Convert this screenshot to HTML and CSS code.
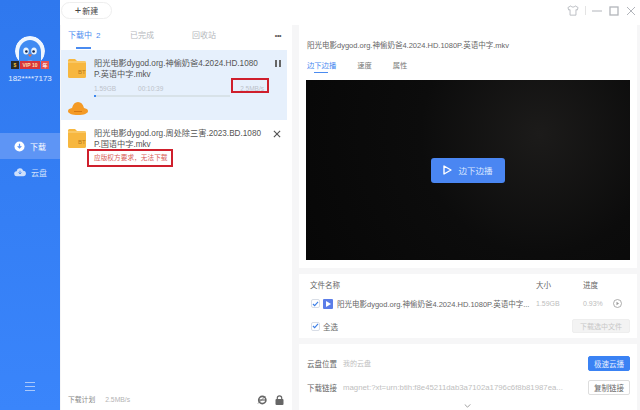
FILE: index.html
```html
<!DOCTYPE html>
<html lang="zh">
<head>
<meta charset="utf-8">
<title>下载</title>
<link rel="stylesheet" href="styles.css">
</head>
<body>
<div class="app">
  <aside class="side">
    <div class="profile">
      <div class="avatar">
        <svg viewBox="0 0 30 30" width="30" height="30">
          <circle cx="15" cy="15" r="15" fill="#eef6ff"/>
          <path d="M4 30V16C4 9 9 4 15 4s11 5 11 12v14z" fill="#3f8bf2"/>
          <ellipse cx="11" cy="15" rx="2.800" ry="3.600" fill="#e6f3ff"/>
          <ellipse cx="19" cy="15" rx="2.800" ry="3.600" fill="#e6f3ff"/>
          <circle cx="11.400" cy="15.500" r="1.300" fill="#16264f"/>
          <circle cx="18.600" cy="15.500" r="1.300" fill="#16264f"/>
          <path d="M12.800 18.500h4.400L15 21z" fill="#ef6a35"/>
          <path d="M6 30c2-7 16-7 18 0z" fill="#dcecff"/>
        </svg>
      </div>
      <div class="badges"><span class="b-s">$</span><span class="b-vip">VIP 10</span><span class="b-r">年</span></div>
      <div class="phone">182****7173</div>
    </div>
    <nav class="nav">
      <div class="nav-item active">
        <svg viewBox="0 0 12 12" width="11" height="11"><circle cx="6" cy="6" r="5.500" fill="#fff"/><path d="M6 3v4M4 5.600 6 7.600l2-2" fill="none" stroke="#5e95f5" stroke-width="1.300"/></svg>
        <span>下载</span>
      </div>
      <div class="nav-item">
        <svg viewBox="0 0 14 10" width="12" height="10"><path d="M3.500 10a3 3 0 0 1-.5-6 4 4 0 0 1 7.700-.6A3.300 3.300 0 0 1 10.500 10z" fill="#cfe0fb"/><path d="M7 3.500v3.500M5.300 5.600 7 7.300l1.700-1.700" fill="none" stroke="#3f86f5" stroke-width="1"/></svg>
        <span>云盘</span>
      </div>
    </nav>
    <div class="menu"><i></i><i></i><i></i></div>
  </aside>

  <div class="main">
    <header class="top">
      <button class="new"><span class="plus">+</span>新建</button>
      <div class="win">
        <svg viewBox="0 0 14 13" width="12" height="11"><path d="M4.500 1 1 3l1 3 1.500-.5V12h7V5.500L12 6l1-3-3.500-2C9 3 5 3 4.500 1z" fill="none" stroke="#b2b5bb"/></svg>
        <span class="sep"></span>
        <svg viewBox="0 0 10 10" width="10" height="10"><path d="M0 5h10" stroke="#b2b5bb"/></svg>
        <svg viewBox="0 0 10 10" width="10" height="10"><rect x="1" y="1" width="8" height="8" fill="none" stroke="#b2b5bb" stroke-width="1.300"/></svg>
        <svg viewBox="0 0 10 10" width="10" height="10"><path d="M1 1l8 8M9 1l-8 8" stroke="#b2b5bb"/></svg>
      </div>
    </header>

    <div class="body">
      <section class="list">
        <div class="tabs">
          <span class="tab on">下载中<em>2</em></span>
          <span class="tab">已完成</span>
          <span class="tab">回收站</span>
          <span class="more">•••</span>
        </div>
        <div class="task sel">
          <svg class="folder" viewBox="0 0 18 19" width="18" height="19"><path d="M0 1.500A1.500 1.500 0 0 1 1.500 0H7l2 2h7.500A1.500 1.500 0 0 1 18 3.500V17.500A1.500 1.500 0 0 1 16.500 19H1.500A1.500 1.500 0 0 1 0 17.500z" fill="#f7b73f"/><path d="M0 3h18" stroke="#fbd78a"/><text x="10" y="15" font-size="6" fill="#b9791b" font-family="Liberation Sans">BT</text></svg>
          <div class="info">
            <div class="name">阳光电影dygod.org.神偷奶爸4.2024.HD.1080<br>P.英语中字.mkv</div>
            <div class="meta"><span class="size">1.59GB</span><span class="time">00:10:39</span><span class="speed">2.5MB/s</span></div>
            <div class="bar"><i class="fill"></i></div>
          </div>
          <span class="act pause"><i></i><i></i></span>
          <svg class="hat" viewBox="0 0 20 13" width="20" height="13"><path d="M0 9C0 7 2 6.500 4 6 5 2 7 0 10 0s5 2 6 6c2 .5 4 1 4 3 0 2.500-4 4-10 4S0 11.500 0 9z" fill="#f49a25"/><path d="M6 9.500h8" stroke="#d5770f"/></svg>
        </div>
        <div class="task plain">
          <svg class="folder" viewBox="0 0 18 19" width="18" height="19"><path d="M0 1.500A1.500 1.500 0 0 1 1.500 0H7l2 2h7.500A1.500 1.500 0 0 1 18 3.500V17.500A1.500 1.500 0 0 1 16.500 19H1.500A1.500 1.500 0 0 1 0 17.500z" fill="#f7b73f"/><path d="M0 3h18" stroke="#fbd78a"/><text x="10" y="15" font-size="6" fill="#b9791b" font-family="Liberation Sans">BT</text></svg>
          <div class="info">
            <div class="name">阳光电影dygod.org.周处除三害.2023.BD.1080<br>P.国语中字.mkv</div>
            <div class="err">应版权方要求，无法下载</div>
          </div>
          <svg class="act" viewBox="0 0 9 9" width="8" height="8"><path d="M1 1l7 7M8 1 1 8" stroke="#555" stroke-width="1.300"/></svg>
        </div>
        <div class="foot">
          <span class="plan">下载计划</span><span class="rate">2.5MB/s</span>
          <span class="foot-ic">
            <svg viewBox="0 0 10 10" width="10" height="10"><circle cx="5.300" cy="5" r="3.600" fill="none" stroke="#666" stroke-width="1.600"/><path d="M2 5h7" stroke="#666" stroke-width="1.200"/><path d="M1 8.500 8.500 1" stroke="#666" stroke-width=".8"/></svg>
            <svg viewBox="0 0 9 10" width="9" height="10"><rect x="0.500" y="4" width="8" height="6" rx="1" fill="#666"/><path d="M2.300 4.500V3a2.200 2.200 0 0 1 4.400 0v1.500" fill="none" stroke="#666" stroke-width="1.200"/></svg>
          </span>
        </div>
      </section>

      <section class="right">
        <div class="card player">
          <div class="ptitle">阳光电影dygod.org.神偷奶爸4.2024.HD.1080P.英语中字.mkv</div>
          <div class="ptabs"><span class="ptab on">边下边播</span><span class="ptab">速度</span><span class="ptab">属性</span></div>
          <div class="video">
            <button class="play"><svg viewBox="0 0 9 10" width="9" height="10"><path d="M1 1l7 4-7 4z" fill="none" stroke="#fff" stroke-width="1.400" stroke-linejoin="round"/></svg>边下边播</button>
          </div>
        </div>
        <div class="card files">
          <div class="fhead"><span class="c-name">文件名称</span><span class="c-size">大小</span><span class="c-prog">进度</span></div>
          <div class="frow">
            <span class="check"><svg viewBox="0 0 8 7" width="7" height="6"><path d="M1 3.500 3 5.500 7 1" fill="none" stroke="#3d7fe6" stroke-width="1.300"/></svg></span>
            <span class="fic"><svg viewBox="0 0 6 7" width="5" height="6"><path d="M0 0l6 3.500L0 7z" fill="#fff"/></svg></span>
            <span class="fname">阳光电影dygod.org.神偷奶爸4.2024.HD.1080P.英语中字...</span>
            <span class="c-size gray">1.59GB</span>
            <span class="c-prog gray">0.93%</span>
            <svg class="cplay" viewBox="0 0 9 9" width="9" height="9"><circle cx="4.500" cy="4.500" r="4" fill="none" stroke="#999" stroke-width=".8"/><path d="M3.500 2.800 6 4.500 3.500 6.200z" fill="#999"/></svg>
          </div>
          <div class="fall">
            <span class="check"><svg viewBox="0 0 8 7" width="7" height="6"><path d="M1 3.500 3 5.500 7 1" fill="none" stroke="#3d7fe6" stroke-width="1.300"/></svg></span>
            <span class="alltxt">全选</span>
            <button class="dlsel">下载选中文件</button>
          </div>
        </div>
        <div class="card links">
          <div class="lrow"><span class="lab">云盘位置</span><span class="val">我的云盘</span><button class="btn prim">极速云播</button></div>
          <div class="lrow second"><span class="lab">下载链接</span><span class="val link">magnet:?xt=urn:btih:f8e45211dab3a7102a1796c6f8b81987ea...</span><button class="btn">复制链接</button></div>
          <svg class="chev" viewBox="0 0 8 5" width="7" height="4"><path d="M.5.500 4 4 7.500.500" fill="none" stroke="#888"/></svg>
        </div>
      </section>
    </div>
  </div>
</div>
<span class="mark mark-speed"></span>
<span class="mark mark-err"></span>
</body>
</html>
```

FILE: styles.css
```css
* { box-sizing: border-box; }
html, body { margin: 0; padding: 0; }
body {
  width: 640px; height: 410px; overflow: hidden; position: relative;
  font-family: "Liberation Sans", "Noto Sans CJK SC", sans-serif;
  font-size: 8px; color: #555; background: #f6f6f7;
}
button { font-family: inherit; padding: 0; }
.app { display: flex; height: 410px; }

/* sidebar */
.side {
  width: 60px; flex: none; display: flex; flex-direction: column;
  background: linear-gradient(#2f78ee, #3a85fb); color: #fff;
}
.profile { margin-top: 36px; display: flex; flex-direction: column; align-items: center; height: 97px; }
.avatar { width: 30px; height: 30px; border-radius: 50%; overflow: hidden; }
.badges { display: flex; height: 8px; margin-top: -5px; font-size: 5px; line-height: 8px; font-weight: 700; position: relative; }
.b-s { width: 8px; background: #2b2b2b; color: #f6c33d; text-align: center; }
.b-vip { width: 20px; background: #d8353c; color: #ffe0b0; text-align: center; margin-left: 1px; white-space: nowrap; }
.b-r { width: 8px; background: #e25252; text-align: center; margin-left: 1px; }
.phone { margin-top: 4px; font-size: 8px; line-height: 11px; color: #e4eeff; }
.nav-item { height: 26px; display: flex; align-items: center; padding-left: 14px; gap: 5px; font-size: 8px; color: #cfe0fb; }
.nav-item.active { background: #5e95f5; color: #fff; }
.menu { margin-top: auto; margin-bottom: 19px; align-self: center; width: 10px; display: flex; flex-direction: column; gap: 2.500px; }
.menu i { height: 1.500px; background: #a9c8fb; }

/* top */
.main { flex: 1; display: flex; flex-direction: column; min-width: 0; }
.top { height: 25px; flex: none; display: flex; align-items: flex-start; background: #fff; justify-content: space-between; }
.new {
  margin: 2px 0 0 1px; width: 51px; height: 17px; border: 1px solid #eee; border-radius: 9px;
  background: #fff; color: #444; font-size: 8px; display: flex; align-items: center; justify-content: center; gap: 1px;
}
.plus { font-size: 11px; line-height: 11px; }
.win { display: flex; align-items: center; gap: 7px; margin: 5px 4px 0 0; }
.sep { width: 1px; height: 9px; background: #e4e4e4; margin: 0 -1px; }

.body { flex: 1; display: flex; min-height: 0; }

/* list */
.list { width: 231px; flex: none; margin-left: 1px; background: #fff; display: flex; flex-direction: column; }
.tabs { height: 25px; flex: none; display: flex; align-items: flex-start; padding: 5px 0 0 7px; position: relative; color: #b5b8bd; margin-right: 5px; }
.tab { width: 62px; font-size: 8px; line-height: 12px; }
.tab.on { color: #4a8bf0; position: relative; }
.tab.on::after { content: ""; position: absolute; left: 8px; top: 17px; width: 15px; height: 2px; background: #4a8bf0; }
.tab em { font-style: normal; margin-left: 4px; }
.more { margin-left: auto; margin-right: 6px; font-size: 7px; line-height: 12px; color: #555; letter-spacing: -.4px; }
.task { position: relative; display: flex; padding: 8px 0 0 7px; margin-right: 5px; }
.task.sel { height: 70px; background: #e6f0fc; }
.task.plain { height: 66px; }
.folder { flex: none; margin-right: 8px; margin-top: 1px; }
.info { width: 170px; }
.name { font-size: 8.200px; line-height: 11px; color: #555; white-space: nowrap; }
.meta { display: flex; margin-top: 4px; font-size: 6.500px; line-height: 9px; color: #bcc2ca; }
.time { margin-left: 22px; }
.speed { margin-left: auto; color: #bcc2ca; }
.bar { height: 2px; margin-top: 2px; background: #d8e2e8; width: 136px; }
.fill { display: block; width: 2px; height: 2px; background: #3b87ef; }
.act { position: absolute; right: 6px; top: 10px; }
.pause { display: flex; gap: 2px; }
.pause i { width: 2px; height: 7px; background: #666; }
.hat { position: absolute; left: 7px; top: 52px; }
.err { margin-top: 2px; font-size: 6.700px; line-height: 11px; color: #d9605a; }
.foot { margin-top: auto; height: 17px; flex: none; display: flex; align-items: flex-start; padding: 0 8px 0 7px; font-size: 6.800px; line-height: 14px; }
.plan { color: #888; }
.rate { margin-left: 10px; color: #b4b4b4; }
.foot-ic { margin-left: auto; display: flex; gap: 8px; margin-top: 2px; }

/* right */
.right { width: 338px; flex: none; margin-left: 7px; display: flex; flex-direction: column; gap: 6px; }
.card { background: #fff; }
.player { height: 243px; padding: 15px 7px 0 8px; }
.ptitle { font-size: 7.500px; line-height: 11px; color: #666; }
.ptabs { display: flex; gap: 21px; margin-top: 9px; height: 20px; }
.ptab { font-size: 7.300px; line-height: 11px; color: #777; position: relative; }
.ptab.on { color: #4a8bf0; }
.ptab.on::after { content: ""; position: absolute; left: 7px; top: 12px; width: 14px; height: 1px; background: #4a8bf0; }
.video {
  height: 180px; width: 324px; margin-left: -1px; display: flex; align-items: center; justify-content: center;
  background: radial-gradient(circle at 72% 30%, #1c1b1a 0, #0c0c0c 45%, #070707 100%), #0a0a0a;
}
.play {
  width: 74px; height: 25px; border: 0; border-radius: 3px; background: #4a86f2; color: #dbe7ff;
  font-size: 8.500px; display: flex; align-items: center; justify-content: center; gap: 6px;
}
.files { height: 64px; padding: 4px 7px 0 11px; }
.fhead, .frow, .fall { display: flex; align-items: center; }
.fhead { height: 13px; color: #666; font-size: 7.500px; }
.c-name { width: 226px; }
.c-size { width: 47px; flex: none; }
.c-prog { width: 34px; flex: none; }
.gray { color: #bdbdbd; font-size: 7px; }
.frow { height: 19px; margin-top: 3px; }
.check { width: 9px; height: 9px; flex: none; border: 1px solid #d8dde6; border-radius: 2px; background: #fff; display: flex; align-items: center; justify-content: center; margin-left: 1px; }
.fic { width: 10px; height: 10px; border-radius: 1px; background: #5b7de8; display: flex; align-items: center; justify-content: center; margin-left: 3px; flex: none; }
.fname { width: 194px; flex: none; margin-left: 4px; font-size: 7.500px; color: #666; white-space: nowrap; overflow: hidden; margin-right: 5px; }
.cplay { margin-left: -4px; }
.fall { height: 14px; margin-top: 6px; }
.alltxt { margin-left: 3px; font-size: 7.500px; color: #666; }
.dlsel { margin-left: auto; width: 58px; height: 14px; border: 1px solid #eee; border-radius: 2px; background: #f3f3f3; color: #c8c8c8; font-size: 7px; }
.links { flex: 1; padding: 12px 7px 0 8px; position: relative; }
.lrow { display: flex; align-items: center; height: 14px; }
.lrow.second { margin-top: 10px; }
.lab { width: 36px; flex: none; font-size: 7.500px; color: #666; }
.val { color: #c0c0c0; font-size: 7px; }
.link { white-space: nowrap; font-size: 7.800px; }
.btn { margin-left: auto; flex: none; width: 42px; height: 15px; border: 1px solid #ddd; border-radius: 2px; background: #fff; color: #666; font-size: 7.500px; }
.btn.prim { background: #3a82f4; border-color: #3a82f4; color: #e2ecff; }
.chev { position: absolute; left: 165px; top: 60px; }

/* annotations drawn over the screenshot */
.mark { position: absolute; border: 2px solid #cf1f2c; }
.mark-speed { left: 231px; top: 78px; width: 38px; height: 15px; }
.mark-err { left: 87px; top: 149px; width: 86px; height: 18px; }
```
